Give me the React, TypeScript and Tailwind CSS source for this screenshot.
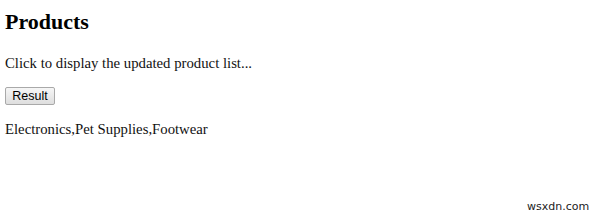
export default function App() {
  return (
    <div className="relative w-[600px] h-[221px] bg-white overflow-hidden font-['Liberation_Serif',serif] text-black">
      <div className="px-[5px]">
        <h2 className="mt-[9px] text-[22px] leading-[25px] font-bold">Products</h2>
        <p className="mt-[21px] text-[14.75px] leading-[17px] text-[#111]">
          Click to display the updated product list...
        </p>
        <button className="mt-[15px] h-[18px] w-[50px] flex items-center justify-center rounded-[2px] border border-[#a9a9a9] bg-gradient-to-b from-[#f6f6f6] to-[#dedede] font-['Liberation_Sans',sans-serif] text-[12.5px] leading-none text-black">
          Result
        </button>
        <p className="mt-[16px] text-[14.75px] leading-[17px] text-[#111]">
          Electronics,Pet Supplies,Footwear
        </p>
      </div>
      <span className="absolute left-[527px] top-[200px] font-['DejaVu_Sans',sans-serif] text-[11px] leading-[13px] text-[#222]">
        wsxdn.com
      </span>
    </div>
  );
}
